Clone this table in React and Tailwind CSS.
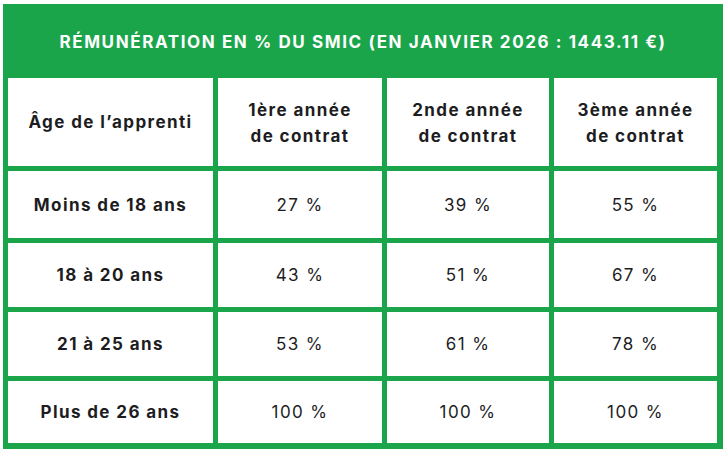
import React from "react";

const heads = ["1ère année", "2nde année", "3ème année"];
const rows = [
  { label: "Moins de 18 ans", vals: ["27 %", "39 %", "55 %"], h: "h-[67px]" },
  { label: "18 à 20 ans", vals: ["43 %", "51 %", "67 %"], h: "h-[64px]" },
  { label: "21 à 25 ans", vals: ["53 %", "61 %", "78 %"], h: "h-[64px]" },
  { label: "Plus de 26 ans", vals: ["100 %", "100 %", "100 %"], h: "h-[62px]" },
];

export default function App() {
  return (
    <div className="w-[727px] h-[452px] bg-white pl-[3px] pt-[4px]" style={{ fontFamily: "Inter, 'Noto Sans', sans-serif" }}>
      <div className="w-[720px] h-[445px] bg-[#1ba54b] flex flex-col">
        <div className="h-[74px] pt-[3px] flex items-center justify-center text-white font-bold text-[17px] tracking-[1.6px]">
          RÉMUNÉRATION EN % DU SMIC (EN JANVIER 2026 : 1443.11 €)
        </div>
        <div className="grid grid-cols-[205px_164px_162px_163px] gap-[5px] pl-[5px] pr-[6px] pb-[6px] text-[#1d1d1f] tracking-[1.4px]">
          <div className="h-[88px] pt-[2px] bg-white flex items-center justify-center font-bold text-[17px]">Âge de l’apprenti</div>
          {heads.map((h) => (
            <div key={h} className="h-[88px] pt-[2px] bg-white flex flex-col items-center justify-center font-bold text-[17px] leading-[26px]">
              <span>{h}</span>
              <span>de contrat</span>
            </div>
          ))}
          {rows.map((r) => (
            <React.Fragment key={r.label}>
              <div className={`${r.h} pt-[2px] bg-white flex items-center justify-center font-bold text-[17px]`}>{r.label}</div>
              {r.vals.map((v, i) => (
                <div key={i} className={`${r.h} pt-[2px] bg-white flex items-center justify-center text-[17px]`}>{v}</div>
              ))}
            </React.Fragment>
          ))}
        </div>
      </div>
    </div>
  );
}
